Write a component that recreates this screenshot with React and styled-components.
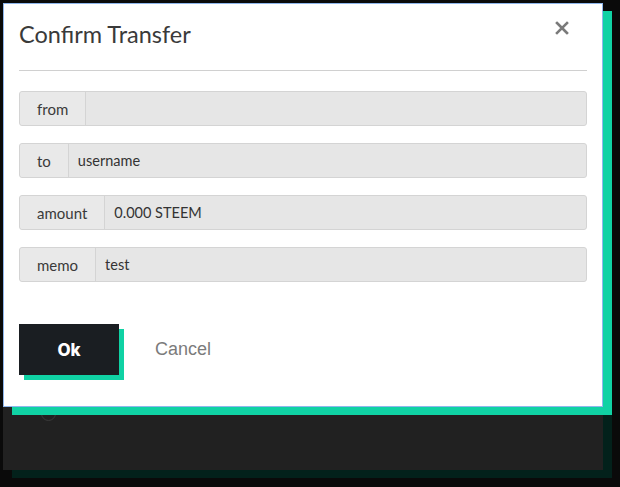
import styled, { createGlobalStyle } from "styled-components";

const GlobalStyle = createGlobalStyle`
  html, body {
    margin: 0;
    padding: 0;
    background: #0a0a0a;
  }
  * {
    box-sizing: border-box;
  }
`;

const fields = [
  { label: "from", value: "" },
  { label: "to", value: "username" },
  { label: "amount", value: "0.000 STEEM" },
  { label: "memo", value: "test" },
];

const App = () => {
  return (
    <>
      <GlobalStyle />
      <Stage>
        <BackCard>
          <Radio />
        </BackCard>
        <Modal>
          <Header>
            <Title>Confirm Transfer</Title>
            <Close aria-label="Close">
              <svg width="14" height="14" viewBox="0 0 14 14">
                <path d="M2 2 L12 12 M12 2 L2 12" stroke="#7a7a7a" strokeWidth="2.6" strokeLinecap="square" />
              </svg>
            </Close>
          </Header>
          <Form>
            {fields.map((f) => (
              <Row key={f.label}>
                <Addon>{f.label}</Addon>
                <Field>{f.value}</Field>
              </Row>
            ))}
          </Form>
          <Footer>
            <OkButton>Ok</OkButton>
            <CancelButton>Cancel</CancelButton>
          </Footer>
        </Modal>
      </Stage>
    </>
  );
};

/*
 * the dimmed page card sits behind, the modal lays over it
 */
const Stage = styled.div`
  position: relative;
  width: 620px;
  height: 487px;
  padding: 3px;
`;

const BackCard = styled.div`
  width: 600px;
  height: 467px;
  background: #212121;
  box-shadow: 9px 8px 0 0 #03211b;
  padding: 407px 0 0 38px;
`;

const Radio = styled.div`
  width: 15px;
  height: 15px;
  margin-top: -4px;
  border-radius: 50%;
  border: 1px solid #3a3a3a;
`;

const Modal = styled.div`
  position: absolute;
  top: 3px;
  left: 3px;
  width: 600px;
  background: #fff;
  border: 1px solid #8fb6ec;
  box-shadow: 9px 8px 0 0 #10d2a4;
  padding: 0 15px 31px;
`;

const Header = styled.div`
  display: flex;
  justify-content: space-between;
  align-items: center;
  height: 67px;
  padding-bottom: 6px;
  border-bottom: 1px solid #d0d0d0;
`;

const Title = styled.h2`
  margin: 0;
  font-family: Lato, "Noto Sans", sans-serif;
  font-weight: 400;
  font-size: 23.5px;
  color: #3a3a3a;
`;

const Close = styled.button`
  align-self: flex-start;
  margin-top: 17px;
  margin-right: 18px;
  border: 0;
  padding: 0;
  background: transparent;
  width: 14px;
  height: 14px;
  display: flex;
`;

const Form = styled.div`
  display: flex;
  flex-direction: column;
  gap: 17px;
  margin-top: 20px;
`;

const Row = styled.div`
  display: flex;
  height: 35px;
  border: 1px solid #d4d4d4;
  border-radius: 3px;
  background: #e6e6e6;
  font-family: Lato, "Noto Sans", sans-serif;
  color: #333;
`;

const Addon = styled.div`
  display: flex;
  align-items: center;
  padding: 0 17px;
  font-size: 15px;
  background: #e9e9e9;
  border-right: 1px solid #d4d4d4;
  border-radius: 3px 0 0 3px;
  color: #3a3a3a;
`;

const Field = styled.div`
  flex: 1;
  display: flex;
  align-items: center;
  padding: 0 9px;
  font-size: 14.5px;
  color: #333;
`;

const Footer = styled.div`
  display: flex;
  align-items: center;
  margin-top: 42px;
`;

const OkButton = styled.button`
  width: 100px;
  height: 51px;
  border: 0;
  background: #1a1e22;
  color: #fff;
  font-family: Inter, "Liberation Sans", sans-serif;
  font-weight: 800;
  font-size: 17px;
  box-shadow: 5px 5px 0 0 #10d2a4;
`;

const CancelButton = styled.button`
  margin-left: 36px;
  border: 0;
  padding: 0;
  background: transparent;
  color: #7b7b7b;
  font-family: "Liberation Sans", Arial, sans-serif;
  font-size: 18px;
`;

export default App;
